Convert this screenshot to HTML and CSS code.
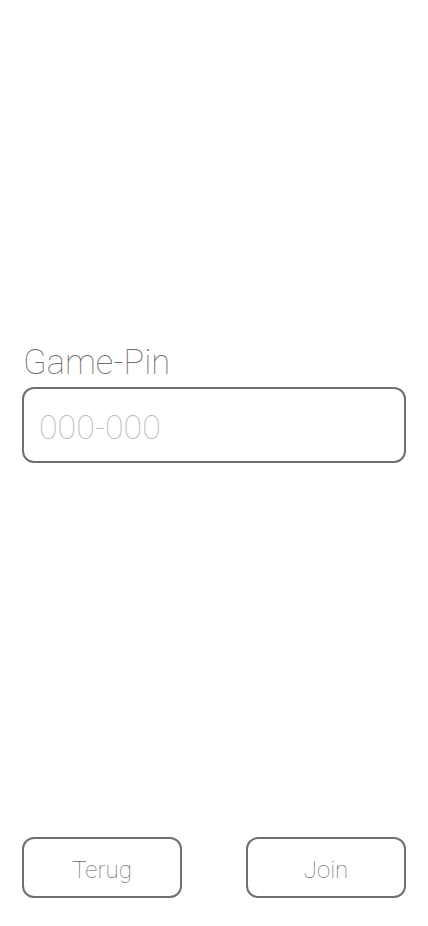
FILE: index.html
```html
<!DOCTYPE html>
<html lang="nl">
<head>
<meta charset="utf-8">
<meta name="viewport" content="width=device-width, initial-scale=1">
<title>Join</title>
<link rel="stylesheet" href="styles.css">
</head>
<body>
<div class="page">
  <div class="field">
    <label class="label" for="pin">Game-Pin</label>
    <input class="pin-input" id="pin" type="text" placeholder="000-000">
  </div>
  <div class="actions">
    <button class="btn" type="button">Terug</button>
    <button class="btn" type="button">Join</button>
  </div>
</div>
</body>
</html>
```
FILE: styles.css
```css
html, body {
  margin: 0;
  padding: 0;
  background: #ffffff;
}
body {
  font-family: Roboto, "Noto Sans", sans-serif;
  font-weight: 100;
}
.page {
  box-sizing: border-box;
  height: 926px;
  padding: 342px 22px 28px 22px;
  display: flex;
  flex-direction: column;
  justify-content: space-between;
}
.field {
  display: flex;
  flex-direction: column;
  gap: 4px;
}
.label {
  font-size: 34.5px;
  line-height: 41px;
  color: #707070;
  padding-left: 1px;
}
.pin-input {
  box-sizing: border-box;
  width: 100%;
  height: 76px;
  border: 2px solid #6f6f6f;
  border-radius: 12px;
  padding: 4px 15px 0 15px;
  font-family: Roboto, "Noto Sans", sans-serif;
  font-weight: 100;
  font-size: 34px;
  color: #555;
  outline: none;
  background: #fff;
}
.pin-input::placeholder {
  color: #b8b8b8;
}
.actions {
  display: flex;
  justify-content: space-between;
}
.btn {
  box-sizing: border-box;
  width: 160px;
  height: 61px;
  border: 2px solid #6f6f6f;
  border-radius: 12px;
  background: #fff;
  font-family: Roboto, "Noto Sans", sans-serif;
  font-weight: 100;
  font-size: 24px;
  color: #6a6a6a;
  padding: 4px 0 0 0;
}
```
